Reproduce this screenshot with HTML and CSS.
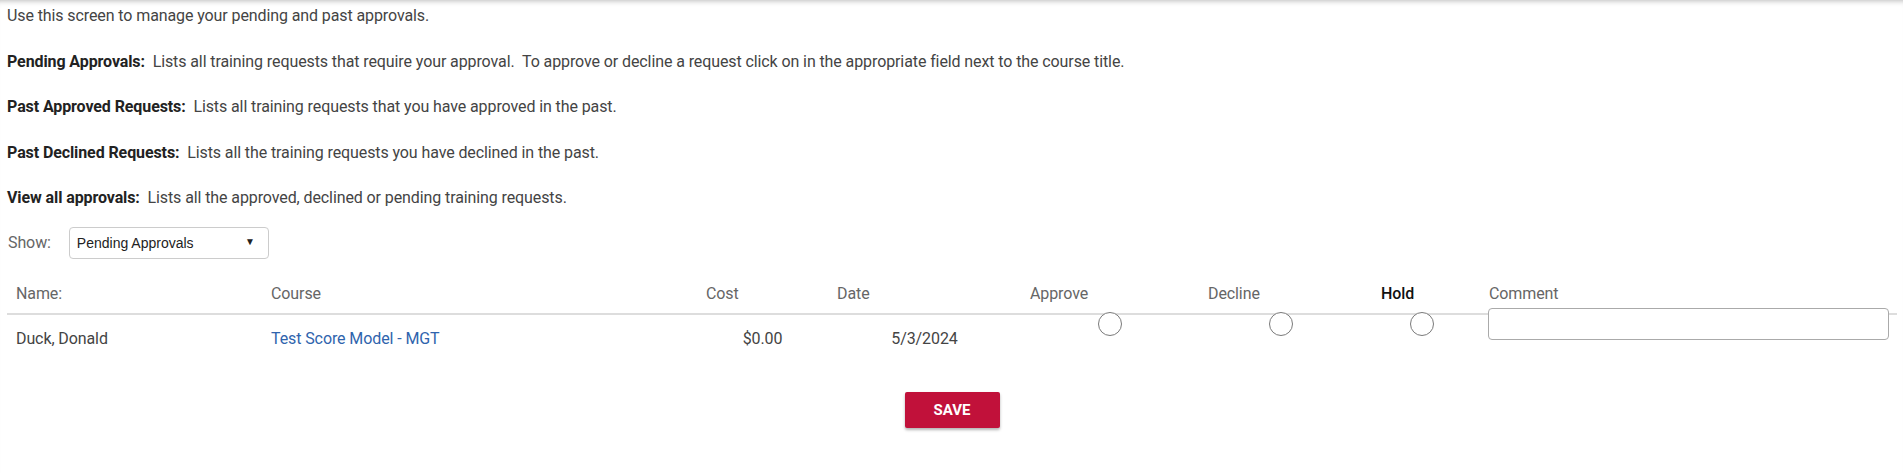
FILE: index.html
```html
<!DOCTYPE html>
<html lang="en">
<head>
    <meta charset="UTF-8">
    <meta name="viewport" content="width=device-width, initial-scale=1.0">
    <title>Approvals</title>
    <link rel="stylesheet" href="styles.css">
</head>
<body>
    <div class="page">
        <div class="intro">
            <p>Use this screen to manage your pending and past approvals.</p>
            <p><b>Pending Approvals:</b>&nbsp; Lists all training requests that require your approval.&nbsp; To approve or decline a request click on in the appropriate field next to the course title.</p>
            <p><b>Past Approved Requests:</b>&nbsp; Lists all training requests that you have approved in the past.</p>
            <p><b>Past Declined Requests:</b>&nbsp; Lists all the training requests you have declined in the past.</p>
            <p><b>View all approvals:</b>&nbsp; Lists all the approved, declined or pending training requests.</p>
        </div>

        <div class="show-row">
            <label for="show">Show:</label>
            <div class="select-wrap">
                <select id="show" name="show">
                    <option>Pending Approvals</option>
                    <option>Past Approved Requests</option>
                    <option>Past Declined Requests</option>
                    <option>View all approvals</option>
                </select>
            </div>
        </div>

        <div class="approvals">
            <div class="head">Name:</div>
            <div class="head">Course</div>
            <div class="head">Cost</div>
            <div class="head">Date</div>
            <div class="head">Approve</div>
            <div class="head">Decline</div>
            <div class="head hold">Hold</div>
            <div class="head">Comment</div>

            <div class="cell">Duck, Donald</div>
            <div class="cell"><a href="#" class="course">Test Score Model - MGT</a></div>
            <div class="cell center">$0.00</div>
            <div class="cell center">5/3/2024</div>
            <div class="cell radio-cell"><input type="radio" name="status0" value="approve"></div>
            <div class="cell radio-cell decline"><input type="radio" name="status0" value="decline"></div>
            <div class="cell radio-cell hold-radio"><input type="radio" name="status0" value="hold"></div>
            <div class="cell comment-cell"><input type="text" name="comment0"></div>
        </div>

        <div class="actions">
            <button type="button" class="save">SAVE</button>
        </div>
    </div>
</body>
</html>
```

FILE: styles.css
```css
html, body {
    margin: 0;
    padding: 0;
    background-color: #fff;
}

body {
    font-family: Roboto, "Liberation Sans", Arial, sans-serif;
    font-size: 16px;
    letter-spacing: -0.1px;
    color: #444;
}

.page {
    min-height: 473px;
    padding: 6px 6px 0 7px;
    box-sizing: border-box;
    box-shadow: inset 0 6px 6px -6px rgba(0, 0, 0, 0.35);
}

.intro p {
    margin: 0 0 25.5px 0;
    line-height: 20px;
}

.intro b {
    color: #222;
    font-weight: 700;
}

.show-row {
    display: flex;
    align-items: center;
    gap: 18px;
    margin-top: -7px;
}

.show-row label {
    color: #666;
    padding-left: 1px;
}

.select-wrap {
    position: relative;
    width: 200px;
}

.select-wrap select {
    appearance: none;
    -webkit-appearance: none;
    width: 200px;
    height: 32px;
    padding: 0 24px 0 7px;
    border: 1px solid #ccc;
    border-radius: 4px;
    background-color: #fff;
    font-family: "Liberation Sans", Arial, sans-serif;
    font-size: 14px;
    letter-spacing: 0;
    color: #222;
}

.select-wrap::after {
    content: "\25BC";
    position: absolute;
    right: 14px;
    top: 9px;
    font-size: 10px;
    color: #222;
    pointer-events: none;
}

.approvals {
    display: grid;
    grid-template-columns: 255px 435px 131px 193px 178px 179px 102px 1fr;
    margin-top: 15px;
}

.head {
    padding: 10px 0 9px 9px;
    line-height: 20px;
    color: #666;
    border-bottom: 2px solid #ddd;
}

.head.hold {
    padding-left: 3px;
    color: #111;
    font-weight: 500;
}

.cell {
    padding: 14px 0 12px 9px;
    line-height: 20px;
    color: #444;
}

.cell.center {
    padding-left: 0;
    text-align: center;
}

.course {
    color: #2f64ad;
    text-decoration: none;
}

.radio-cell {
    padding: 0;
    display: flex;
    justify-content: center;
}

.radio-cell.decline {
    padding-right: 16px;
}

.radio-cell.hold-radio {
    padding-right: 14px;
}

.radio-cell input {
    appearance: none;
    -webkit-appearance: none;
    width: 24px;
    height: 24px;
    margin: -3px 0 0 0;
    border: 1.5px solid #7a7a7a;
    border-radius: 50%;
    background-color: #fff;
    box-sizing: border-box;
}

.comment-cell {
    padding: 0 8px 0 8px;
}

.comment-cell input {
    display: block;
    width: 100%;
    height: 32px;
    margin-top: -7px;
    box-sizing: border-box;
    border: 1px solid #aaa;
    border-radius: 4px;
    background-color: #fff;
}

.actions {
    text-align: center;
    margin-top: 31px;
}

.save {
    width: 95px;
    height: 36px;
    background-color: #c1113a;
    color: #fff;
    border: none;
    border-radius: 2px;
    font-family: Roboto, "Liberation Sans", Arial, sans-serif;
    font-weight: 700;
    font-size: 15px;
    letter-spacing: 0;
    box-shadow: 0 2px 3px rgba(0, 0, 0, 0.3);
    cursor: pointer;
}
```
